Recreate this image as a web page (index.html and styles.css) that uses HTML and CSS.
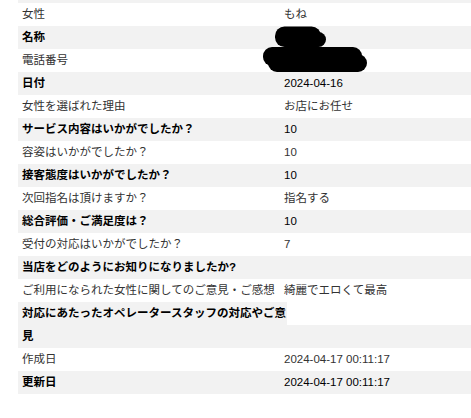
FILE: index.html
```html
<!DOCTYPE html>
<html lang="ja">
<head>
<meta charset="utf-8">
<title>詳細</title>
<link rel="stylesheet" href="styles.css">
</head>
<body>
<main class="sheet">
  <div class="row shaded row--cut"></div>
  <div class="row"><div class="label">女性</div><div class="value">もね</div></div>
  <div class="row shaded"><div class="label">名称</div><div class="value">
    <svg class="redact redact--name" width="53" height="22" viewBox="0 0 53 22" aria-hidden="true"><rect x="0" y="0.5" width="46" height="20.5" rx="9.5" fill="#000"/><rect x="28" y="6" width="23" height="15" rx="7.5" fill="#000"/></svg>
  </div></div>
  <div class="row"><div class="label">電話番号</div><div class="value">
    <svg class="redact redact--phone" width="106" height="26" viewBox="0 0 106 26" aria-hidden="true"><rect x="0" y="0" width="99" height="19" rx="9" fill="#000"/><rect x="5" y="7" width="99" height="18" rx="9" fill="#000"/></svg>
  </div></div>
  <div class="row shaded"><div class="label">日付</div><div class="value">2024-04-16</div></div>
  <div class="row"><div class="label">女性を選ばれた理由</div><div class="value">お店にお任せ</div></div>
  <div class="row shaded"><div class="label">サービス内容はいかがでしたか？</div><div class="value">10</div></div>
  <div class="row"><div class="label">容姿はいかがでしたか？</div><div class="value">10</div></div>
  <div class="row shaded"><div class="label">接客態度はいかがでしたか？</div><div class="value">10</div></div>
  <div class="row"><div class="label">次回指名は頂けますか？</div><div class="value">指名する</div></div>
  <div class="row shaded"><div class="label">総合評価・ご満足度は？</div><div class="value">10</div></div>
  <div class="row"><div class="label">受付の対応はいかがでしたか？</div><div class="value">7</div></div>
  <div class="row shaded"><div class="label">当店をどのようにお知りになりましたか?</div><div class="value"></div></div>
  <div class="row"><div class="label">ご利用になられた女性に関してのご意見・ご感想</div><div class="value">綺麗でエロくて最高</div></div>
  <div class="row shaded row--wrap"><div class="label">対応にあたったオペレータースタッフの対応やご意見</div><div class="value"></div></div>
  <div class="row"><div class="label">作成日</div><div class="value">2024-04-17 00:11:17</div></div>
  <div class="row shaded"><div class="label">更新日</div><div class="value">2024-04-17 00:11:17</div></div>
</main>
</body>
</html>
```
FILE: styles.css
```css
html, body {
  margin: 0;
  padding: 0;
  background: #fff;
}

body {
  font-family: "Liberation Sans", "Noto Sans CJK JP", sans-serif;
  font-size: 11.5px;
  line-height: 23px;
  color: #333;
}

.sheet {
  display: flex;
  flex-direction: column;
  padding-left: 18px;
}

.row {
  display: flex;
  min-height: 23px;
  background: #fff;
  color: #333;
}

.row.shaded {
  background: #f2f2f2;
  color: #000;
}

.row--cut {
  min-height: 3px;
  height: 3px;
}

.label {
  flex: none;
  width: 262px;
  box-sizing: border-box;
  padding-left: 4px;
  white-space: normal;
}

.shaded .label {
  font-weight: bold;
}

.value {
  flex: 1;
  min-width: 0;
  padding-left: 4px;
  position: relative;
}

.row--wrap .label {
  width: 269px;
  background: #f2f2f2;
}

.row--wrap .value {
  align-self: flex-start;
  height: 23px;
  background: #fff;
}

.redact {
  position: absolute;
  display: block;
}

.redact--name {
  left: -5px;
  top: 0;
}

.redact--phone {
  left: -17px;
  top: -2px;
}
```
